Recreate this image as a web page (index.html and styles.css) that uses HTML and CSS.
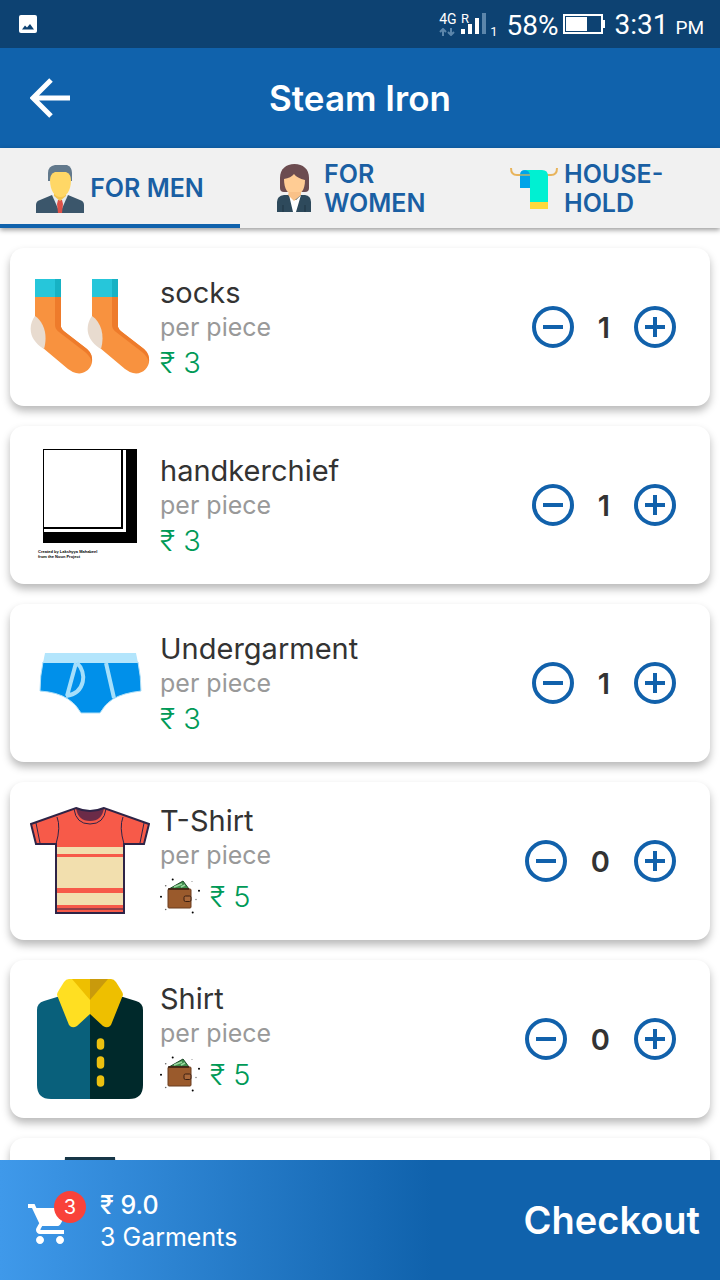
FILE: index.html
```html
<!DOCTYPE html>
<html lang="en">
<head>
    <meta charset="UTF-8">
    <meta name="viewport" content="width=device-width, initial-scale=1.0">
    <title>Steam Iron</title>
    <link rel="stylesheet" href="styles.css">
</head>
<body>
    <!-- shared icons -->
    <svg class="sprite" aria-hidden="true">
        <symbol id="minus" viewBox="0 0 42 42">
            <circle cx="21" cy="21" r="19" fill="none" stroke="#1161ab" stroke-width="4"/>
            <path d="M11 21h20" stroke="#1161ab" stroke-width="4"/>
        </symbol>
        <symbol id="plus" viewBox="0 0 42 42">
            <circle cx="21" cy="21" r="19" fill="none" stroke="#1161ab" stroke-width="4"/>
            <path d="M11 21h20M21 11v20" stroke="#1161ab" stroke-width="4"/>
        </symbol>
        <symbol id="wallet" viewBox="0 0 40 36">
            <path d="M9 11L23 3l6 8z" fill="#3f8f4c" stroke="#1f4a2a"/>
            <path d="M14 9l8-3M21 9l4-2" stroke="#9bd6a0" stroke-width="1.5"/>
            <rect x="8" y="11" width="23" height="19" rx="1" fill="#9a5a2c" stroke="#6b3d1e"/>
            <path d="M8 11h21" stroke="#3a1f12" stroke-width="1.5"/>
            <rect x="24" y="18" width="7" height="5.5" rx="1.5" fill="#a9683a" stroke="#3a1f12"/>
            <circle cx="12.7" cy="1.5" r="1"/>
            <circle cx="5.7" cy="7.7" r=".8" fill="#666"/>
            <circle cx="1" cy="18.7" r="1"/>
            <circle cx="39" cy="12.7" r="1"/>
            <circle cx="36" cy="21.5" r=".8" fill="#888"/>
            <circle cx="32.7" cy="34.5" r="1"/>
            <circle cx="5.7" cy="31.5" r=".8" fill="#666"/>
            <circle cx="32" cy="3.5" r=".6" fill="#888"/>
        </symbol>
    </svg>

    <div class="status-bar">
        <svg class="status-photo" viewBox="0 0 18 18">
            <rect width="18" height="18" rx="2" fill="#fff"/>
            <path d="M3 14.5l3-4 2 2L11 9l4 5.500z" fill="#0d4272"/>
        </svg>
        <div class="status-right">
            <div class="network">
                <span>4G</span>
                <svg viewBox="0 0 16 8"><path d="M4 8V2M1 4l3-3 3 3M12 0v6M9 4l3 3 3-3" fill="none" stroke="#5c86ab" stroke-width="2"/></svg>
            </div>
            <svg class="signal" viewBox="0 0 26 24">
                <text x="0" y="11" font-size="13" fill="#fff">R</text>
                <path d="M2 22v-5M9 22V12M16 22V6" stroke="#fff" stroke-width="4"/>
                <path d="M23 22V1" stroke="#5c86ab" stroke-width="4"/>
            </svg>
            <span class="sim">1</span>
            <span class="percent">58%</span>
            <svg class="battery" viewBox="0 0 42 20">
                <rect x="1" y="1" width="38" height="18" fill="none" stroke="#fff" stroke-width="2"/>
                <rect x="3" y="3" width="21" height="14" fill="#fff"/>
                <rect x="40" y="6" width="2" height="8" fill="#fff"/>
            </svg>
            <span class="time">3:31 <small>PM</small></span>
        </div>
    </div>

    <header>
        <button class="back-btn" aria-label="Back">
            <svg viewBox="0 0 40 40"><path d="M21 2L3 20l18 18M3 20h37" fill="none" stroke="#fff" stroke-width="5"/></svg>
        </button>
        <h1>Steam Iron</h1>
    </header>

    <nav class="tabs">
        <button class="tab active">
            <svg viewBox="0 0 48 48">
                <path d="M0 48v-8q0-4 4-5l12-5h16l12 5q4 1 4 5v8z" fill="#3b566b"/>
                <path d="M16 30h16l-8 18z" fill="#e4e9ed"/>
                <path d="M22 35h4l1 4-1 9h-4l-1-9z" fill="#dd5149"/>
                <path d="M18 25h12v6l-6 5-6-5z" fill="#f4c44e"/>
                <path d="M12 16V8q0-7 7-8h12q5 2 5 8v8z" fill="#62798c"/>
                <path d="M14 15q0-6 5-8h11q5 2 5 8c0 11-5 17-10.500 17S14 26 14 15z" fill="#ffd766"/>
            </svg>
            <span>FOR MEN</span>
        </button>
        <button class="tab">
            <svg viewBox="0 0 48 48">
                <path d="M10 23V13C10 4 16-1 24.500-1S39 4 39 13v10q0 4-4 4H14q-4 0-4-4z" fill="#6c4c50"/>
                <path d="M19 24h11v10l-5 6-6-6z" fill="#f2b377"/>
                <path d="M14 14q7-1 10-5 3 4 11 6c0 10-4 15-10.500 15S14 24 14 14z" fill="#ffcc94"/>
                <path d="M7 47V37q0-6 7-7h21q6 1 6 7v10z" fill="#2e4a5c"/>
                <path d="M19 30l5 5h2l5-5-5 17h-3z" fill="#fff"/>
                <path d="M18 30l6 6 7-6v-3H19z" fill="#f9c188"/>
                <path d="M13 40v7M35 40v7" stroke="#1e3443"/>
            </svg>
            <span>FOR WOMEN</span>
        </button>
        <button class="tab">
            <svg viewBox="0 0 48 48">
                <path d="M10 23V10q0-5 5-5h7v18z" fill="#00a4e8"/>
                <path d="M1 3q0 7 6 7h34q6 0 6-7" fill="none" stroke="#e8b45c" stroke-width="2"/>
                <path d="M14 5h18q6 0 6 6v27H20V11q0-6-6-6z" fill="#00f0d2"/>
                <path d="M10 10h10" stroke="#8ab08c" stroke-width="2"/>
                <path d="M20 37h18v7H20z" fill="#ffd93b"/>
            </svg>
            <span>HOUSE-HOLD</span>
        </button>
    </nav>

    <main class="list">
        <article class="card">
            <svg class="picture" viewBox="0 0 120 120">
                <g id="sock">
                    <path d="M5 29h26v31q1 3 4 5l22 17c12 12 1 27-11 24q-4-1-8-4L13 81Q5 75 5 62z" fill="#f8923f"/>
                    <path d="M25 29h6v31q1 3 4 5l22 17q6 5 5 13-2-6-7-10L29 65q-4-3-4-7z" fill="#ee7b2b"/>
                    <path d="M5 49C-3 60 0 74 14 82 18 68 14 55 5 49z" fill="#e8dbcf"/>
                    <path d="M5 12h26v18H5z" fill="#26c6da"/>
                    <path d="M25 12h6v18h-6z" fill="#17b2c4"/>
                </g>
                <use href="#sock" x="57"/>
            </svg>
            <div class="info">
                <h2>socks</h2>
                <p class="unit">per piece</p>
                <p class="price">₹ 3</p>
            </div>
            <div class="stepper">
                <button aria-label="Remove socks"><svg viewBox="0 0 42 42"><use href="#minus"/></svg></button>
                <span>1</span>
                <button aria-label="Add socks"><svg viewBox="0 0 42 42"><use href="#plus"/></svg></button>
            </div>
        </article>

        <article class="card">
            <svg class="picture" viewBox="0 0 120 120">
                <path d="M13 4h94v94H13z"/>
                <path d="M93 5h3v82H14v-3h79z" fill="#fff"/>
                <path d="M14 5h77v77H14z" fill="#fff"/>
                <text class="credit" x="8" y="108">Created by Lakshyya Mahabeel</text>
                <text class="credit" x="8" y="113">from the Noun Project</text>
            </svg>
            <div class="info">
                <h2>handkerchief</h2>
                <p class="unit">per piece</p>
                <p class="price">₹ 3</p>
            </div>
            <div class="stepper">
                <button aria-label="Remove handkerchief"><svg viewBox="0 0 42 42"><use href="#minus"/></svg></button>
                <span>1</span>
                <button aria-label="Add handkerchief"><svg viewBox="0 0 42 42"><use href="#plus"/></svg></button>
            </div>
        </article>

        <article class="card">
            <svg class="picture" viewBox="0 0 120 120">
                <path d="M13 39h95q3 15 3 29-18 2-28 8-8 5-13 14H51q-5-9-13-14-11-7-28-8 0-15 3-29z" fill="#0090ea" stroke="#b0e0f8"/>
                <path d="M15 30h91l2 10H13z" fill="#b3e5fc"/>
                <path d="M46 40l-9 33M47 40c10 9 9 30-11 33M76 40l8 35" fill="none" stroke="#a5dffb" stroke-width="4"/>
            </svg>
            <div class="info">
                <h2>Undergarment</h2>
                <p class="unit">per piece</p>
                <p class="price">₹ 3</p>
            </div>
            <div class="stepper">
                <button aria-label="Remove undergarment"><svg viewBox="0 0 42 42"><use href="#minus"/></svg></button>
                <span>1</span>
                <button aria-label="Add undergarment"><svg viewBox="0 0 42 42"><use href="#plus"/></svg></button>
            </div>
        </article>

        <article class="card">
            <svg class="picture" viewBox="0 0 120 120">
                <path d="M46 7q14 6 28 0l45 16-5 20H94v69H26V43H6L1 23z" fill="#f75a49"/>
                <path d="M27 46h67v7H27zM27 56h67v31H27zM27 92h67v12H27z" fill="#f2dfae"/>
                <path d="M46 7q14 6 28 0-2 13-14 13T46 7z" fill="#6b2b48"/>
                <path d="M44 8q2 15 16 15T76 8M27 16q4 10-1 27M93 16q-4 10 1 27M6 22l4 20M114 22l-4 20M27 108h67" fill="none" stroke="#2e2447"/>
                <path d="M46 7q14 6 28 0l45 16-5 20H94v69H26V43H6L1 23z" fill="none" stroke="#2e2447" stroke-width="2"/>
            </svg>
            <div class="info">
                <h2>T-Shirt</h2>
                <p class="unit">per piece</p>
                <p class="price wallet"><svg viewBox="0 0 40 36"><use href="#wallet"/></svg>₹ 5</p>
            </div>
            <div class="stepper">
                <button aria-label="Remove T-Shirt"><svg viewBox="0 0 42 42"><use href="#minus"/></svg></button>
                <span>0</span>
                <button aria-label="Add T-Shirt"><svg viewBox="0 0 42 42"><use href="#plus"/></svg></button>
            </div>
        </article>

        <article class="card">
            <svg class="picture" viewBox="0 0 120 120">
                <path d="M60 10L27 18 14 22q-7 2-7 9v75q0 14 14 14h39z" fill="#09607b"/>
                <path d="M60 10l33 8 13 4q7 2 7 9v75q0 14-14 14H60z" fill="#00292b"/>
                <path d="M60 35L47 47q-5 3-8-1L27 16q0-2 2-5l5-8q2-3 5-3h21z" fill="#ffdf22"/>
                <path d="M60 35l13 12q5 3 8-1l12-30q0-2-2-5l-5-8q-2-3-5-3H60z" fill="#eebf00"/>
                <path d="M42 0h18v21z" fill="#eebf00"/>
                <path d="M78 0H60v21z" fill="#c99a0c"/>
                <path d="M70.500 63v4M70.500 81v5M70.500 100v4" stroke="#ecc010" stroke-width="7.500" stroke-linecap="round"/>
            </svg>
            <div class="info">
                <h2>Shirt</h2>
                <p class="unit">per piece</p>
                <p class="price wallet"><svg viewBox="0 0 40 36"><use href="#wallet"/></svg>₹ 5</p>
            </div>
            <div class="stepper">
                <button aria-label="Remove Shirt"><svg viewBox="0 0 42 42"><use href="#minus"/></svg></button>
                <span>0</span>
                <button aria-label="Add Shirt"><svg viewBox="0 0 42 42"><use href="#plus"/></svg></button>
            </div>
        </article>

        <article class="card">
            <svg class="picture" viewBox="0 0 120 120">
                <path d="M35 0h50l8 120H68l-8-80-8 80H27z" fill="#173647"/>
            </svg>
        </article>
    </main>

    <footer>
        <div class="cart">
            <svg viewBox="0 0 24 24"><path fill="#fff" d="M7 18c-1.100 0-1.990.9-1.990 2S5.900 22 7 22s2-.9 2-2-.9-2-2-2zM1 2v2h2l3.600 7.590-1.350 2.450c-.16.280-.25.610-.25.960 0 1.100.9 2 2 2h12v-2H7.420c-.14 0-.25-.11-.25-.25l.03-.12.900-1.630h7.450c.75 0 1.410-.41 1.750-1.030l3.580-6.490A1 1 0 0 0 20 4H5.210l-.94-2H1zm16 16c-1.100 0-1.990.9-1.990 2s.89 2 1.990 2 2-.9 2-2-.9-2-2-2z"/></svg>
            <span class="badge">3</span>
        </div>
        <div class="summary">
            <p class="total">₹ 9.0</p>
            <p>3 Garments</p>
        </div>
        <button class="checkout-btn">Checkout</button>
    </footer>
</body>
</html>
```
FILE: styles.css
```css
* {
    box-sizing: border-box;
    margin: 0;
    padding: 0;
}
body {
    display: flex;
    flex-direction: column;
    height: 100vh;
    font-family: Inter, "Open Sans", sans-serif;
    font-size: 25px;
    background-color: #fff;
    color: #333;
}
button {
    font: inherit;
    color: inherit;
    background: none;
    border: none;
    cursor: pointer;
}
svg {
    display: block;
    flex-shrink: 0;
}
.sprite {
    position: absolute;
    width: 0;
    height: 0;
}

/* phone status bar */
.status-bar {
    display: flex;
    align-items: center;
    justify-content: space-between;
    flex-shrink: 0;
    height: 48px;
    padding: 0 16px 0 19px;
    background-color: #0d4272;
    color: #fff;
    font-family: Roboto, sans-serif;
}
.status-photo {
    width: 18px;
    height: 18px;
}
.status-right {
    display: flex;
    align-items: center;
}
.network {
    width: 22px;
    font-size: 14px;
    line-height: 14px;
}
.network svg {
    width: 16px;
    height: 8px;
    margin-top: 2px;
}
.signal {
    width: 26px;
    height: 24px;
}
.sim {
    margin: 14px 9px 0 3px;
    font-size: 13px;
}
.percent,
.time {
    padding-top: 3px;
    font-size: 28px;
    line-height: 45px;
}
.battery {
    width: 42px;
    height: 20px;
    margin: 0 9px 0 5px;
}
.time small {
    font-size: 19px;
}

header {
    display: grid;
    grid-template-columns: 40px 1fr 40px;
    align-items: center;
    flex-shrink: 0;
    height: 100px;
    padding: 0 30px;
    background-color: #1062ac;
    color: #fff;
    text-align: center;
}
.back-btn svg {
    width: 40px;
    height: 40px;
}
h1 {
    font-size: 35px;
    font-weight: 600;
}

.tabs {
    position: relative;
    display: flex;
    flex-shrink: 0;
    height: 80px;
    background-color: #f1f1f1;
    box-shadow: 0 2px 5px rgba(0, 0, 0, 0.4);
}
.tab {
    display: flex;
    flex: 1 1 0;
    align-items: center;
    justify-content: center;
    gap: 6px;
    padding: 5px 30px 0;
    border-bottom: 4px solid transparent;
    color: #1a5fa3;
    font-size: 25px;
    font-weight: 600;
    line-height: 29px;
    text-align: left;
}
.tab.active {
    border-bottom-color: #1062ac;
}
.tab svg {
    width: 48px;
    height: 48px;
    overflow: visible;
}

.list {
    display: flex;
    flex: 1;
    flex-direction: column;
    gap: 20px;
    min-height: 0;
    padding: 20px 10px;
    overflow-y: auto;
    scrollbar-width: none;
}
.card {
    display: flex;
    flex-shrink: 0;
    align-items: center;
    gap: 10px;
    padding: 19px 34px 19px 20px;
    border-radius: 14px;
    background-color: #fff;
    box-shadow: 0 5px 8px rgba(0, 0, 0, 0.28);
}
.picture {
    width: 120px;
    height: 120px;
}
.credit {
    font-family: "Liberation Sans", sans-serif;
    font-size: 4px;
    font-weight: bold;
}
.info {
    flex: 1;
    line-height: 35px;
}
.info h2 {
    font-size: 29px;
    font-weight: 400;
}
.unit {
    color: #999;
}
.price {
    color: #009a57;
    font-size: 29px;
    font-weight: 300;
}
.price.wallet {
    display: flex;
    align-items: center;
    gap: 10px;
    height: 46px;
}
.wallet svg {
    width: 40px;
    height: 36px;
}
.stepper {
    display: flex;
    align-items: center;
    font-size: 29px;
    font-weight: 600;
}
.stepper span {
    padding: 0 24px;
}
.stepper svg {
    width: 42px;
    height: 42px;
}

footer {
    display: flex;
    flex-shrink: 0;
    align-items: center;
    height: 120px;
    padding: 0 20px 0 26px;
    background: linear-gradient(90deg, #3f99ea, #1062ac 60%);
    color: #fff;
}
.cart {
    position: relative;
    margin-top: 8px;
}
.cart svg {
    width: 48px;
    height: 48px;
}
.badge {
    position: absolute;
    top: -9px;
    right: -12px;
    width: 32px;
    height: 32px;
    border-radius: 50%;
    background-color: #f9423a;
    font-size: 20px;
    line-height: 32px;
    text-align: center;
}
.summary {
    flex: 1;
    margin-left: 26px;
    padding-top: 2px;
    line-height: 32px;
}
.total {
    font-weight: 500;
}
.checkout-btn {
    font-size: 38px;
    font-weight: 600;
}
```
